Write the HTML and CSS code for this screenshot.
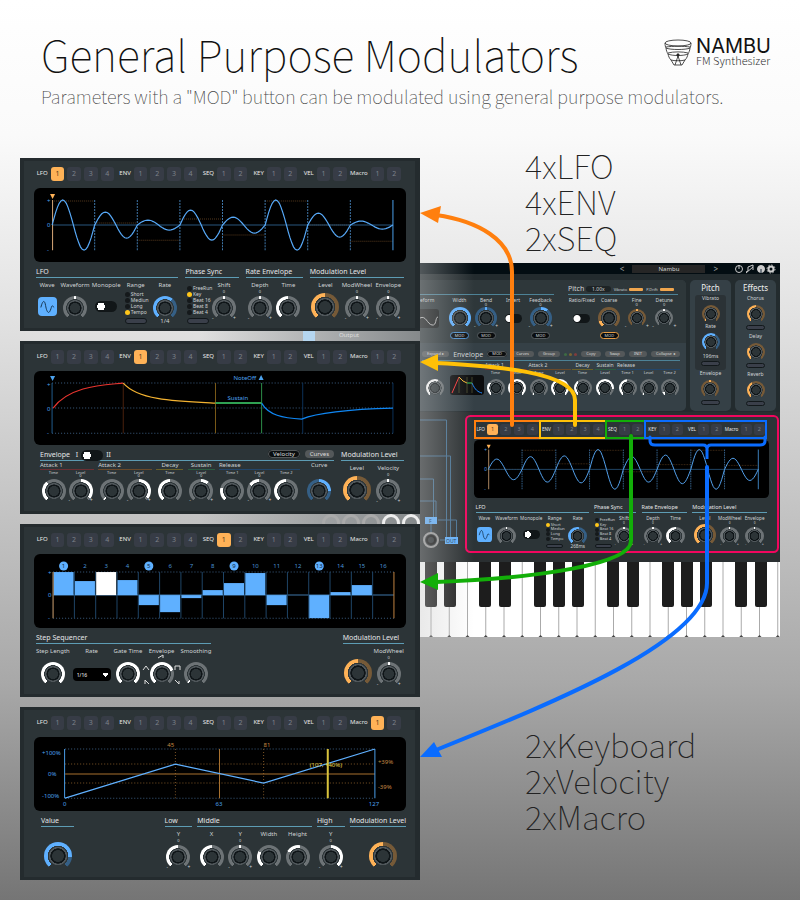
FILE: index.html
```html
<!DOCTYPE html>
<html lang="en">

<head>
    <meta charset="UTF-8" />
    <meta name="viewport" content="width=device-width, initial-scale=1.0" />
    <title>General Purpose Modulators - NAMBU FM Synthesizer</title>
    <link rel="stylesheet" href="styles.css">
</head>

<body>
    <div class="page">
        <header class="header">
            <div>
                <h1>General Purpose Modulators</h1>
                <p>Parameters with a "MOD" button can be modulated using general purpose modulators.</p>
            </div>
            <div class="logo">
                <svg class="logo-mark" viewBox="0 0 28 28" fill="none" stroke="#222" stroke-width="0.8">
                    <ellipse cx="14" cy="4" rx="13" ry="3" />
                    <path d="M1 4c0 2 .4 4 1 5 4 2 20 2 24 0 .6-1 1-3 1-5M2 9c.3 3 1 4 2 6 4 2 16 2 20 0 1-2 1.700-3 2-6M4 15c.5 2 1 4 3 6l3 5h8l3-5c2-2 2.500-4 3-6M7 21c3 1 11 1 14 0M2 8c6-1 18-1 24 0M4 14c5-1.500 15-1.500 20 0M11 26l3-9 3 9" />
                    <circle cx="14" cy="16" r="1.200" fill="#222" />
                </svg>
                <div>
                    <strong>NAMBU</strong>
                    <span>FM Synthesizer</span>
                </div>
            </div>
        </header>

        <main class="main">
            <div class="panels">
                <!-- LFO -->
                <section class="panel">
                    <div class="tabs" data-active="LFO1"></div>
                    <svg class="screen wave" viewBox="0 0 371 74" data-amps="25,13,5,15,8,25,12,4" data-levels="13,35,52,31,47,13,37,53"></svg>
                    <div class="sections lfo-sections">
                        <div>
                            <h2>LFO</h2>
                            <div class="controls lfo-cols">
                                <label class="ctl">Wave
                                    <button class="wave-btn" type="button" aria-label="Wave"><svg viewBox="0 0 20 20"><path d="M3 11c2-8 4-8 5-2s3 10 5 5 1-6 4-3" /></svg></button>
                                </label>
                                <label class="ctl">Waveform<input type="range" class="knob" style="--a:134deg;--b:146deg"></label>
                                <label class="ctl">Monopole<input type="checkbox" class="switch"></label>
                                <div class="ctl">Range
                                    <div class="radios">
                                        <label><input type="radio" name="range1">Short</label>
                                        <label><input type="radio" name="range1">Mediun</label>
                                        <label><input type="radio" name="range1">Long</label>
                                        <label><input type="radio" name="range1" checked>Tempo</label>
                                    </div>
                                    <button class="led" type="button" aria-label="Next range"></button>
                                </div>
                                <label class="ctl">Rate<input type="range" class="knob blue" style="--b:180deg"><small>1/4</small></label>
                            </div>
                        </div>
                        <div>
                            <h2>Phase Sync</h2>
                            <div class="controls sync-cols">
                                <div class="ctl sync">
                                    <div class="radios">
                                        <label><input type="radio" name="sync1">FreeRun</label>
                                        <label><input type="radio" name="sync1" checked>Key</label>
                                        <label><input type="radio" name="sync1">Beat 16</label>
                                        <label><input type="radio" name="sync1">Beat 8</label>
                                        <label><input type="radio" name="sync1">Beat 4</label>
                                    </div>
                                    <button class="led" type="button" aria-label="Next sync"></button>
                                </div>
                                <label class="ctl bi">Shift<input type="range" class="knob" style="--a:134deg;--b:146deg"></label>
                            </div>
                        </div>
                        <div>
                            <h2>Rate Envelope</h2>
                            <div class="controls">
                                <label class="ctl bi">Depth<input type="range" class="knob" style="--a:134deg;--b:146deg"></label>
                                <label class="ctl">Time<input type="range" class="knob" style="--b:140deg"></label>
                            </div>
                        </div>
                        <div>
                            <h2>Modulation Level</h2>
                            <div class="controls">
                                <label class="ctl">Level<input type="range" class="knob big orange" style="--b:140deg"></label>
                                <label class="ctl bi">ModWheel<input type="range" class="knob" style="--a:134deg;--b:146deg"></label>
                                <label class="ctl bi">Envelope<input type="range" class="knob" style="--a:134deg;--b:146deg"></label>
                            </div>
                        </div>
                    </div>
                </section>

                <div class="strip"><i></i><span>Output</span></div>

                <!-- Envelope -->
                <section class="panel">
                    <div class="tabs" data-active="ENV1"></div>
                    <svg class="screen" viewBox="0 0 371 74">
                        <path class="dots" d="M18 12H359M18 37H359M18 62H359" />
                        <path d="M18 12V62" stroke="#215b8c" />
                        <path d="M89 62V12" stroke="#4a210c" /><path d="M181 12V62" stroke="#7a5a18" />
                        <path d="M227 12V62" stroke="#2c8c48" /><path d="M268 12V62M358 12V62" stroke="#0c3158" />
                        <path d="M19 37C36 14 72 14 89 12" stroke="#e8352f" stroke-width="1.200" />
                        <path d="M89 12C104 29 140 30 181 32" stroke="#f3b231" stroke-width="1.200" />
                        <path d="M181 32H227" stroke="#2fa153" stroke-width="2" />
                        <path d="M227 32C234 44 248 47 267 48C284 41 320 38 358 37" stroke="#0f86f2" stroke-width="1.200" />
                        <path class="blue-fill" d="M16 5h5l-2.500 5zM224 9h5l-2.500-5z" />
                        <text class="t-blue" x="199" y="9">NoteOff</text><text class="t-blue" x="193" y="29">Sustain</text>
                        <text class="t-blue" x="13" y="16">+</text><text class="t-blue" x="13" y="40">0</text><text class="t-blue" x="13" y="64">-</text>
                    </svg>
                    <div class="sections env-sections">
                        <div>
                            <h2>Envelope <span class="switch-line">I<input type="checkbox" class="switch" aria-label="Envelope mode">II</span>
                                <span class="pills"><button type="button" class="pill dark">Velocity</button><button type="button" class="pill">Curves</button></span>
                            </h2>
                            <div class="env-row">
                                <div class="sub red"><h3>Attack 1</h3>
                                    <label class="ctl tiny">Time<input type="range" class="knob" style="--b:100deg"></label>
                                    <label class="ctl tiny bi">Level<input type="range" class="knob" style="--a:140deg;--b:270deg"></label>
                                </div>
                                <div class="sub amber"><h3>Attack 2</h3>
                                    <label class="ctl tiny">Time<input type="range" class="knob" style="--b:6deg"></label>
                                    <label class="ctl tiny bi">Level<input type="range" class="knob" style="--a:140deg;--b:270deg"></label>
                                </div>
                                <div class="sub gold"><h3>Decay</h3>
                                    <label class="ctl tiny">Time<input type="range" class="knob" style="--b:140deg"></label>
                                </div>
                                <div class="sub green"><h3>Sustain</h3>
                                    <label class="ctl tiny bi">Level<input type="range" class="knob" style="--a:140deg;--b:180deg"></label>
                                </div>
                                <div class="sub navy"><h3>Release</h3>
                                    <label class="ctl tiny">Time 1<input type="range" class="knob" style="--b:65deg"></label>
                                    <label class="ctl tiny bi">Level<input type="range" class="knob" style="--a:85deg;--b:140deg"></label>
                                    <label class="ctl tiny">Time 2<input type="range" class="knob" style="--b:140deg"></label>
                                </div>
                                <label class="ctl curve">Curve<input type="range" class="knob blue" style="--a:140deg;--b:230deg"></label>
                            </div>
                        </div>
                        <div>
                            <h2>Modulation Level</h2>
                            <div class="controls">
                                <label class="ctl">Level<input type="range" class="knob big orange" style="--b:140deg"></label>
                                <label class="ctl bi">Velocity<input type="range" class="knob" style="--a:134deg;--b:146deg"></label>
                            </div>
                        </div>
                    </div>
                </section>

                <div class="strip knobs-strip"><b></b><b></b><b></b><b class="on"></b><b class="on"></b></div>

                <!-- Step sequencer -->
                <section class="panel">
                    <div class="tabs" data-active="SEQ1"></div>
                    <svg class="screen steps" viewBox="0 0 371 74" data-steps="23,14,23,15,-10,-17,-3,5,12,22,-10,0,-23,3,10,0"></svg>
                    <div class="sections seq-sections">
                        <div>
                            <h2>Step Sequencer</h2>
                            <div class="controls seq-cols">
                                <label class="ctl">Step Length<input type="range" class="knob" style="--b:280deg"></label>
                                <label class="ctl">Rate<select class="select"><option>1/16</option></select></label>
                                <label class="ctl">Gate Time<input type="range" class="knob" style="--b:280deg"></label>
                                <label class="ctl shapes">Envelope<input type="range" class="knob" style="--b:210deg">
                                    <svg viewBox="0 0 40 32"><path d="M16 4l5-3v3M1 16l3-4 3 4M33 16v-4h5v4M3 30v-4l4 4M33 26l4 4v-3" /></svg>
                                </label>
                                <label class="ctl">Smoothing<input type="range" class="knob" style="--b:6deg"></label>
                            </div>
                        </div>
                        <div>
                            <h2>Modulation Level</h2>
                            <div class="controls">
                                <label class="ctl"><span>&nbsp;</span><input type="range" class="knob big orange" aria-label="Level" style="--b:140deg"></label>
                                <label class="ctl bi">ModWheel<input type="range" class="knob" style="--a:134deg;--b:146deg"></label>
                            </div>
                        </div>
                    </div>
                </section>

                <div class="strip plain"></div>

                <!-- Macro -->
                <section class="panel">
                    <div class="tabs" data-active="Macro1"></div>
                    <svg class="screen" viewBox="0 0 371 74">
                        <path class="dots" d="M31 12H340M31 61H340" />
                        <path d="M31 27H340M31 46H340M141 12V61M229 12V61" stroke="#7b5426" stroke-dasharray="1 2" />
                        <path d="M31 37H340M185 12V61" stroke="#a8712f" />
                        <path d="M30.500 12V61M340 12V61" stroke="#4a9ee8" />
                        <path d="M31 61L141 27L229 46L340 12" stroke="#5fb0ff" stroke-width="1.200" />
                        <path d="M293 12V61" stroke="#d8c23c" stroke-width="2" />
                        <g class="t-blue"><text x="8" y="18">+100%</text><text x="14" y="39">0%</text><text x="8" y="61">-100%</text><text x="29" y="69">0</text><text x="181" y="69">63</text><text x="334" y="69">127</text></g>
                        <g class="t-orange"><text x="133" y="10">45</text><text x="229" y="10">81</text><text x="343" y="27">+39%</text><text x="343" y="52">-39%</text></g>
                        <text class="t-yellow" x="275" y="30">(107, +40%)</text>
                    </svg>
                    <div class="sections macro-sections">
                        <div class="value">
                            <h2>Value</h2>
                            <div class="controls"><label class="ctl"><span>&nbsp;</span><input type="range" class="knob big blue" aria-label="Value" style="--b:235deg"></label></div>
                        </div>
                        <div>
                            <h2>Low</h2>
                            <div class="controls"><label class="ctl bi">Y<input type="range" class="knob" style="--b:140deg"></label></div>
                        </div>
                        <div>
                            <h2>Middle</h2>
                            <div class="controls">
                                <label class="ctl">X<input type="range" class="knob" style="--b:140deg"></label>
                                <label class="ctl bi">Y<input type="range" class="knob" style="--a:134deg;--b:146deg"></label>
                                <label class="ctl">Width<input type="range" class="knob" style="--b:80deg"></label>
                                <label class="ctl">Height<input type="range" class="knob" style="--a:80deg;--b:150deg"></label>
                            </div>
                        </div>
                        <div>
                            <h2>High</h2>
                            <div class="controls"><label class="ctl bi">Y<input type="range" class="knob" style="--a:140deg;--b:280deg"></label></div>
                        </div>
                        <div>
                            <h2>Modulation Level</h2>
                            <div class="controls level-last"><label class="ctl"><span>&nbsp;</span><input type="range" class="knob big orange" aria-label="Modulation Level" style="--b:140deg"></label></div>
                        </div>
                    </div>
                </section>
            </div>

            <div class="side">
                <p class="list">4xLFO<br>4xENV<br>2xSEQ</p>

                <div class="synth">
                    <div class="topbar">
                        <button type="button">&lt;</button>
                        <span class="preset">Nambu</span>
                        <button type="button">&gt;</button>
                        <svg viewBox="0 0 42 10" fill="none" stroke="#ccc">
                            <circle cx="5" cy="5" r="3.500" /><path d="M5 1v4M12 8l2-1V3l5-2v5M12 9l7-6" />
                            <circle cx="27" cy="5" r="3.500" fill="#ccc" /><path d="M27 5v4M25 4v0M29 4v0" stroke="#123" />
                            <circle cx="37" cy="5" r="2.500" stroke-width="2" /><circle cx="37" cy="5" r="4" stroke-dasharray="1.500 1.600" />
                        </svg>
                    </div>
                    <div class="upper">
                        <div class="operator">
                            <div class="osc">
                                <div class="osc-left">
                                    <h2>&nbsp;</h2>
                                    <div class="controls">
                                        <div class="ctl cut">eform<svg class="shape" viewBox="0 0 19 19"><path d="M0 9c6-3 7 6 12 7s3-8 6-8" /></svg></div>
                                        <label class="ctl">Width<input type="range" class="knob blue" style="--b:280deg"><span class="mod on">MOD</span></label>
                                        <label class="ctl bi">Bend<input type="range" class="knob blue" style="--a:134deg;--b:146deg"><span class="mod">MOD</span></label>
                                        <label class="ctl">Invert<input type="checkbox" class="switch"></label>
                                        <label class="ctl bi">Feedback<input type="range" class="knob blue" style="--a:140deg;--b:180deg"><span class="mod">MOD</span></label>
                                    </div>
                                </div>
                                <div class="osc-pitch">
                                    <h2>Pitch <span class="tag">1.00x</span><em>Vibrato<i></i></em><em>P.Drift<i></i></em></h2>
                                    <div class="controls">
                                        <label class="ctl ratio">Ratio/Fixed<input type="checkbox" class="switch"></label>
                                        <label class="ctl">Coarse<input type="range" class="knob orange" style="--b:30deg"><span class="mod warm">MOD</span></label>
                                        <label class="ctl bi">Fine<input type="range" class="knob small orange" style="--a:134deg;--b:146deg"></label>
                                        <label class="ctl bi">Detune<input type="range" class="knob small" style="--a:134deg;--b:146deg"></label>
                                    </div>
                                </div>
                            </div>
                            <div class="op-env">
                                <h2><button type="button" class="pill">Expand ▸</button> Envelope <button type="button" class="pill dark">MOD</button><button type="button" class="pill">Curves</button><button type="button" class="pill">Group</button><span class="leds"><i></i><i></i><i></i></span><button type="button" class="pill">Copy</button><button type="button" class="pill">Swap</button><button type="button" class="pill">INIT</button><button type="button" class="pill">Collapse ◂</button></h2>
                                <div class="env-row">
                                    <label class="ctl tiny"><span>&nbsp;</span><input type="range" class="knob small" aria-label="Envelope shape" style="--b:160deg"></label>
                                    <svg class="mini" viewBox="0 0 34 20"><path d="M2 18L9 2" stroke="#f33" /><path d="M9 2l4 4 4 2" stroke="#fb3" /><path d="M17 8h5" stroke="#3c5" /><path d="M22 8c3 7 6 9 10 10" stroke="#28f" /><path d="M9 2v16M17 2v16M22 2v16" stroke="#774" stroke-width=".5" /></svg>
                                    <div class="sub red"><h3>Attack 1</h3>
                                        <label class="ctl tiny">Time<input type="range" class="knob small" style="--b:90deg"></label>
                                        <label class="ctl tiny">Level<input type="range" class="knob small" style="--b:280deg"></label>
                                    </div>
                                    <div class="sub amber"><h3>Attack 2</h3>
                                        <label class="ctl tiny">Time<input type="range" class="knob small" style="--b:6deg"></label>
                                        <label class="ctl tiny">Level<input type="range" class="knob small" style="--b:280deg"></label>
                                    </div>
                                    <div class="sub gold"><h3>Decay</h3>
                                        <label class="ctl tiny">Time<input type="range" class="knob small" style="--b:100deg"></label>
                                    </div>
                                    <div class="sub green"><h3>Sustain</h3>
                                        <label class="ctl tiny">Level<input type="range" class="knob small" style="--b:240deg"></label>
                                    </div>
                                    <div class="sub navy"><h3>Release</h3>
                                        <label class="ctl tiny">Time 1<input type="range" class="knob small" style="--b:130deg"></label>
                                        <label class="ctl tiny">Level<input type="range" class="knob small" style="--b:6deg"></label>
                                        <label class="ctl tiny">Time 2<input type="range" class="knob small" style="--b:20deg"></label>
                                    </div>
                                </div>
                            </div>
                        </div>
                        <div class="column">
                            <h2>Pitch</h2>
                            <div class="inset">
                                <label class="ctl">Vibrato<input type="range" class="knob small orange" style="--b:6deg"></label>
                                <label class="ctl">Rate<input type="range" class="knob small blue" style="--b:170deg"><small>196ms</small></label>
                                <button class="led" type="button" aria-label="Vibrato mod"></button>
                            </div>
                            <label class="ctl">Envelope<input type="range" class="knob small orange" style="--a:134deg;--b:146deg"></label>
                            <button class="led" type="button" aria-label="Envelope mod"></button>
                        </div>
                        <div class="column effects">
                            <h2>Effects</h2>
                            <label class="ctl">Chorus<input type="range" class="knob small orange" style="--b:140deg"></label>
                            <button class="led" type="button" aria-label="Chorus on"></button>
                            <label class="ctl">Delay<input type="range" class="knob small orange" style="--b:80deg"></label>
                            <button class="led" type="button" aria-label="Delay on"></button>
                            <label class="ctl">Reverb<input type="range" class="knob small orange" style="--b:110deg"></label>
                            <button class="led" type="button" aria-label="Reverb on"></button>
                        </div>
                    </div>
                    <div class="lower">
                        <svg class="wires" viewBox="0 0 45 146">
                            <path d="M0 8H26.500V125M0 44H30.500V125M0 67H13.500V105M0 89H16V105M18 108H36.500V125M11 112v10M20 128H25" />
                            <rect x="5" y="105" width="12" height="7" /><rect x="25" y="125" width="13" height="7" />
                            <text x="9" y="111">F</text><text x="26" y="131">OUT</text>
                            <circle cx="11" cy="128" r="7" /><circle class="hub" cx="11" cy="128" r="4" />
                        </svg>
                        <section class="panel mini-panel">
                            <div class="tabs" data-active="LFO1"></div>
                            <svg class="screen wave" viewBox="0 0 371 74" data-amps="13,16,17,25,16,18,25,14" data-levels="37,13,30,13,40,31,13,32"></svg>
                            <div class="sections lfo-sections">
                                <div>
                                    <h2>LFO</h2>
                                    <div class="controls lfo-cols">
                                        <label class="ctl">Wave
                                            <button class="wave-btn" type="button" aria-label="Wave"><svg viewBox="0 0 20 20"><path d="M3 11c2-8 4-8 5-2s3 10 5 5 1-6 4-3" /></svg></button>
                                        </label>
                                        <label class="ctl">Waveform<input type="range" class="knob" style="--a:134deg;--b:146deg"></label>
                                        <label class="ctl">Monopole<input type="checkbox" class="switch"></label>
                                        <div class="ctl">Range
                                            <div class="radios">
                                                <label><input type="radio" name="range2" checked>Short</label>
                                                <label><input type="radio" name="range2">Mediun</label>
                                                <label><input type="radio" name="range2">Long</label>
                                                <label><input type="radio" name="range2">Tempo</label>
                                            </div>
                                            <button class="led" type="button" aria-label="Next range"></button>
                                        </div>
                                        <label class="ctl">Rate<input type="range" class="knob blue" style="--b:150deg"><small>268ms</small></label>
                                    </div>
                                </div>
                                <div>
                                    <h2>Phase Sync</h2>
                                    <div class="controls sync-cols">
                                        <div class="ctl sync">
                                            <div class="radios">
                                                <label><input type="radio" name="sync2">FreeRun</label>
                                                <label><input type="radio" name="sync2" checked>Key</label>
                                                <label><input type="radio" name="sync2">Beat 16</label>
                                                <label><input type="radio" name="sync2">Beat 8</label>
                                                <label><input type="radio" name="sync2">Beat 4</label>
                                            </div>
                                            <button class="led" type="button" aria-label="Next sync"></button>
                                        </div>
                                        <label class="ctl bi">Shift<input type="range" class="knob" style="--a:134deg;--b:146deg"></label>
                                    </div>
                                </div>
                                <div>
                                    <h2>Rate Envelope</h2>
                                    <div class="controls">
                                        <label class="ctl bi">Depth<input type="range" class="knob" style="--a:134deg;--b:146deg"></label>
                                        <label class="ctl">Time<input type="range" class="knob" style="--b:140deg"></label>
                                    </div>
                                </div>
                                <div>
                                    <h2>Modulation Level</h2>
                                    <div class="controls">
                                        <label class="ctl">Level<input type="range" class="knob big orange" style="--b:140deg"></label>
                                        <label class="ctl bi">ModWheel<input type="range" class="knob" style="--a:134deg;--b:146deg"></label>
                                        <label class="ctl bi">Envelope<input type="range" class="knob" style="--a:134deg;--b:146deg"></label>
                                    </div>
                                </div>
                            </div>
                        </section>
                    </div>
                    <svg class="keyboard" viewBox="0 0 360 75"></svg>
                </div>

                <p class="list">2xKeyboard<br>2xVelocity<br>2xMacro</p>
            </div>
        </main>

        <!-- arrows from the modulator tabs to the detail panels -->
        <svg class="arrows" viewBox="0 0 800 900">
            <g stroke="#ff7f0e">
                <rect x="475" y="421" width="65" height="17" />
                <path class="line" d="M512 425V272C512 240 478 221 436 215" /><path class="head" d="M420 213L441 206L438 223Z" fill="#ff7f0e" />
            </g>
            <g stroke="#ffc107">
                <rect x="540" y="421" width="66" height="17" />
                <path class="line" d="M575 425V400C575 372 495 366 436 363" /><path class="head" d="M420 362L438 354V371Z" fill="#ffc107" />
            </g>
            <g stroke="#12ae08">
                <rect x="606" y="421" width="39" height="17" />
                <path class="line" d="M631 436V541C631 564 540 578 436 582" /><path class="head" d="M420 582L438 573V590Z" fill="#12ae08" />
            </g>
            <g stroke="#0a6cff">
                <rect x="645" y="421" width="121" height="17" />
                <path class="line brace" d="M650 437V441Q650 445 655 445H703Q707 445 707 449V459V449Q707 445 711 445H760Q765 445 765 441V437" />
                <path class="line" d="M707 467V583C707 640 560 700 436 750" /><path class="head" d="M420 757L434 742L442 757Z" fill="#0a6cff" />
            </g>
        </svg>
    </div>

    <script src="script.js"></script>
</body>

</html>
```

FILE: styles.css
```css
* {
    box-sizing: border-box;
}

body {
    margin: 0;
    font-family: "Noto Sans", "Open Sans", sans-serif;
    background: #777;
}

.page {
    position: relative;
    min-height: 900px;
    background: linear-gradient(#fff 0, #fafafa 15%, #e2e2e2 35%, #c6c6c6 55%, #a8a8a8 76%, #757575 100%);
}

h1, h2, h3, p {
    margin: 0;
    font-weight: normal;
}

button, select, input {
    font-family: inherit;
    margin: 0;
    padding: 0;
}

.header {
    display: flex;
    justify-content: space-between;
    height: 147px;
    padding: 22px 29px 0 41px;
    font-family: "Noto Sans CJK JP", sans-serif;
}

.header h1 {
    font-size: 43px;
    line-height: 62px;
    font-weight: 100;
    color: #111;
}

.header p {
    font-size: 18px;
    line-height: 24px;
    font-weight: 100;
    white-space: nowrap;
    color: #444;
}

.header > div:first-child {
    width: 0;
    white-space: nowrap;
}

.logo {
    display: flex;
    gap: 4px;
    padding-top: 17px;
    height: 46px;
}

.logo-mark {
    width: 28px;
    height: 28px;
}

.logo strong, .logo span {
    display: block;
    white-space: nowrap;
}

.logo strong {
    font: 400 20px/15px Inter, sans-serif;
    color: #111;
}

.logo span {
    font-size: 11px;
    line-height: 12px;
    font-weight: 300;
    color: #333;
}

.main {
    display: grid;
    grid-template-columns: 20fr 18fr;
    padding: 0 20px;
}

.panels {
    padding-top: 11px;
}

/* modulator panels */
.panel {
    height: 173px;
    padding: 6px 9px 0 10px;
    border: 3px solid #242b2e;
    border-left-width: 4px;
    border-right-width: 5px;
    background: #2c3437;
    color: #cfd3d5;
    overflow: hidden;
}

.tabs {
    display: grid;
    grid-template-columns: repeat(22, 1fr);
    gap: 3px;
    padding-right: 5px;
    height: 14px;
}

.tabs span {
    justify-self: end;
    font-size: 6px;
    line-height: 13px;
    color: #e8e8e8;
}

.tabs button {
    border: 0;
    border-radius: 3px;
    background: #373c46;
    color: #7d828a;
    font-size: 7px;
    line-height: 14px;
}

.tabs button.active {
    background: #ffb257;
    color: #54391a;
}

.screen {
    display: block;
    width: 100%;
    margin-top: 7px;
    border-radius: 6px;
    background: #000;
    fill: none;
}

.screen text {
    font-size: 6px;
    stroke: none;
}

.dots {
    stroke: #3b5d80;
    stroke-dasharray: 1 2;
}

.blue-fill, .t-blue {
    fill: #4da3ee;
}

.t-orange {
    fill: #c58a45;
}

.t-yellow {
    fill: #e8d650;
}

.sections {
    display: grid;
    gap: 7px;
    padding: 5px 2px 0;
}

.lfo-sections {
    grid-template-columns: 142fr 53fr 57fr 94fr;
}

.env-sections {
    grid-template-columns: 290fr 62fr;
    padding-left: 6px;
}

.seq-sections {
    grid-template-columns: 171fr 60fr;
    column-gap: 132px;
}

.macro-sections {
    grid-template-columns: 120fr 28fr 116fr 28fr 54fr;
    gap: 5px;
    padding-left: 7px;
    padding-right: 0;
}

.value {
    width: 28%;
}

.sections h2 {
    height: 11px;
    border-bottom: 1px solid #5d9cb4;
    font-size: 7px;
    line-height: 9px;
    color: #e4e6e7;
    white-space: nowrap;
}

.controls {
    display: grid;
    grid-auto-flow: column;
    grid-auto-columns: 1fr;
    padding-top: 3px;
}

.lfo-cols {
    grid-template-columns: 22fr 34fr 28fr 31fr 27fr;
}

.sync-cols {
    grid-template-columns: 25px 27px;
}

.seq-cols {
    grid-template-columns: 33fr 43fr 28fr 38fr 29fr;
}

.level-last {
    padding-left: 11px;
}

.ctl {
    position: relative;
    display: flex;
    flex-direction: column;
    align-items: center;
    min-width: 0;
    font-size: 6px;
    line-height: 9px;
    white-space: nowrap;
}

.ctl small {
    font-size: 6px;
    line-height: 6px;
    margin-top: -2px;
}

.knob {
    --a: 0deg;
    --on: #fff;
    --off: #6d7376;
    appearance: none;
    flex: none;
    width: 24px;
    height: 24px;
    margin-top: 6px;
    border-radius: 50%;
    background:
        radial-gradient(circle closest-side, #2c3437 0 40%, #0f1518 44% 53%, #50575b 56% 64%, #2c3437 67% 72%, transparent 75%),
        conic-gradient(from 220deg, var(--off) 0 var(--a), var(--on) var(--a) var(--b), var(--off) var(--b) 280deg, transparent 280deg);
}

.knob::-webkit-slider-thumb {
    appearance: none;
    width: 0;
    height: 0;
}

.knob.big {
    width: 28px;
    height: 28px;
    margin-top: 3px;
}

.knob.small {
    width: 18px;
    height: 18px;
    margin-top: 4px;
}

.knob.blue {
    --on: #5fb0ff;
    --off: #355f85;
}

.knob.orange {
    --on: #ffb257;
    --off: #765a38;
}

/* zero mark and minus / plus around bipolar knobs */
.bi::before {
    content: "0";
    position: absolute;
    top: 8px;
    font-size: 4px;
    line-height: 6px;
}

.bi::after {
    content: "- +";
    position: absolute;
    top: 35px;
    width: 24px;
    font-size: 5px;
    line-height: 5px;
    text-align-last: justify;
}

.wave-btn {
    width: 19px;
    height: 19px;
    margin-top: 7px;
    border: 0;
    border-radius: 4px;
    background: #5fb0ff;
}

.wave-btn svg {
    display: block;
    fill: none;
    stroke: #12304c;
    stroke-width: 1;
}

.switch {
    appearance: none;
    flex: none;
    width: 22px;
    height: 11px;
    margin-top: 11px;
    border-radius: 6px;
    background: radial-gradient(circle at 6px 50%, #fff 0 4px, transparent 4px), #111618;
}

.radios {
    display: flex;
    flex-direction: column;
    width: 22px;
    margin-top: 1px;
}

.radios label {
    display: flex;
    align-items: center;
    gap: 1px;
    font-size: 5px;
    line-height: 6px;
}

.radios input {
    appearance: none;
    flex: none;
    width: 5px;
    height: 5px;
    border-radius: 50%;
    background: #15191b;
}

.radios input:checked {
    background: #ffc61a;
}

.sync .radios {
    margin-top: 4px;
}

.led {
    flex: none;
    width: 22px;
    height: 6px;
    margin-top: 3px;
    border: 1px solid #12181b;
    border-radius: 3px;
    background: #3a3f4a;
}

.select {
    appearance: none;
    width: 38px;
    height: 13px;
    margin-top: 12px;
    padding-left: 4px;
    border: 0;
    border-radius: 4px;
    background: conic-gradient(from -40deg at 50% 100%, #fff 80deg, transparent 0) no-repeat 30px 5px / 5px 4px, #000;
    color: #fff;
    font-size: 5px;
}

.shapes svg {
    position: absolute;
    top: 7px;
    width: 40px;
    height: 32px;
    fill: none;
    stroke: #ddd;
}

/* envelope rows */
.env-row {
    display: flex;
    justify-content: space-between;
}

.switch-line .switch {
    margin: 0 3px;
    vertical-align: middle;
}

.switch-line {
    display: inline-block;
    height: 9px;
    margin-left: 4px;
}

.pills {
    float: right;
    display: flex;
    gap: 5px;
}

.pill {
    height: 8px;
    padding: 0 5px;
    border: 0;
    border-radius: 4px;
    background: #54585a;
    color: #ddd;
    font-size: 6px;
    line-height: 8px;
}

.pill.dark {
    background: #0a0d0f;
    outline: 1px solid #54585a;
    outline-offset: -1px;
}

.sub {
    display: grid;
    grid-auto-flow: column;
    grid-template-rows: 9px auto;
}

.sub h3 {
    grid-row: 1;
    grid-column: 1 / -1;
    font-size: 6px;
    line-height: 8px;
    border-bottom: 1px solid;
    white-space: nowrap;
}

.sub .ctl {
    grid-row: 2;
    width: 27px;
}

.sub.red h3 {
    grid-column: 1 / span 2;
    border-color: #6b3034;
}

.sub.amber h3 {
    grid-column: 1 / span 2;
    border-color: #6b4a2a;
}

.sub.gold h3 {
    text-align: center;
    border-color: #6b6128;
}

.sub.green h3 {
    text-align: center;
    border-color: #2b5c41;
}

.sub.navy h3 {
    grid-column: 1 / span 3;
    border-color: #23466b;
}

.tiny {
    font-size: 4px;
    line-height: 6px;
}

.tiny .knob {
    margin-top: 3px;
}

.tiny.bi::before {
    top: 4px;
    line-height: 4px;
}

.tiny.bi::after {
    top: 28px;
}

.curve {
    width: 30px;
}

.curve .knob {
    margin-top: 9px;
}

/* slices of the instrument showing between the panels */
.strip {
    display: flex;
    justify-content: flex-end;
    gap: 24px;
    height: 10px;
    padding-right: 61px;
    background: linear-gradient(90deg, transparent 45%, #85898b);
    color: #ddd;
    font-size: 6px;
    line-height: 8px;
    overflow: hidden;
}

.strip i {
    width: 12px;
    background: #b5d6f0;
}

.knobs-strip {
    gap: 2px;
    padding-right: 0;
}

.knobs-strip b {
    width: 18px;
    height: 18px;
    border: 3px solid #aaa;
    border-radius: 50%;
}

.knobs-strip .on {
    border-color: #eee;
}

.strip.plain {
    background: none;
}

/* right side */
.list {
    padding-left: 105px;
    font-family: "Noto Sans CJK JP", sans-serif;
    font-size: 33px;
    line-height: 36px;
    font-weight: 100;
    color: #222;
}

.synth {
    position: relative;
    margin: 8px 0 89px;
    background: #232b2e;
    color: #cfd3d5;
}

.synth::after {
    content: "";
    position: absolute;
    inset: 0;
    background: linear-gradient(90deg, rgba(200, 200, 200, 0.4), transparent 15%);
    pointer-events: none;
}

.topbar {
    display: flex;
    align-items: center;
    justify-content: flex-end;
    gap: 8px;
    height: 11px;
    padding-right: 4px;
    background: #030d12;
}

.topbar button {
    border: 0;
    background: none;
    color: #aaa;
    font-size: 8px;
    line-height: 10px;
}

.preset {
    width: 73px;
    background: #262626;
    font-size: 6px;
    line-height: 8px;
    text-align: center;
}

.topbar svg {
    width: 42px;
    height: 10px;
    margin-left: 8px;
}

.upper {
    display: grid;
    grid-template-columns: 1fr 41px 41px;
    gap: 4px;
    height: 138px;
    padding: 6px 4px 1px 0;
}

.operator, .column {
    border-radius: 0 5px 5px 0;
    background: #354046;
    overflow: hidden;
}

.column {
    border-radius: 5px;
    display: flex;
    flex-direction: column;
    align-items: center;
}

.column h2 {
    font-size: 8px;
    line-height: 15px;
    color: #eee;
}

.column .ctl {
    font-size: 5px;
    line-height: 7px;
}

.column .knob {
    margin-top: 3px;
}

.inset {
    display: flex;
    flex-direction: column;
    align-items: center;
    width: 31px;
    height: 75px;
    border-radius: 3px;
    background: #2b3236;
}

.column .led {
    width: 19px;
    height: 5px;
    margin: 2px 0 3px;
}

.inset small {
    margin: 2px 0 0;
    font-size: 5px;
}

.osc {
    display: grid;
    grid-template-columns: 134px 110px;
    gap: 14px;
    height: 63px;
    padding-top: 4px;
    background: #2e373a;
}

.osc h2 {
    height: 11px;
    border-bottom: 1px solid #4d8296;
    font-size: 7px;
    line-height: 10px;
    white-space: nowrap;
}

.osc .controls {
    padding-top: 2px;
}

.osc-left .controls {
    grid-template-columns: 26px 27px 26px 28px 27px;
}

.osc .ctl {
    font-size: 5px;
    line-height: 7px;
}

.osc .knob {
    width: 22px;
    height: 22px;
    margin-top: 3px;
}

.osc .knob.small {
    width: 18px;
    height: 18px;
    margin-top: 5px;
}

.osc .switch {
    width: 17px;
    height: 9px;
    margin-top: 10px;
    background: radial-gradient(circle at 4px 50%, #fff 0 3px, transparent 4px), #111618;
}

.osc .bi::before {
    top: 5px;
}

.osc .bi::after {
    top: 27px;
}

.ctl.cut {
    align-items: flex-start;
}

.shape {
    width: 19px;
    height: 19px;
    margin-top: 5px;
    border-radius: 0 3px 3px 0;
    background: #171a1b;
    fill: none;
    stroke: #bbb;
}

.mod {
    width: 19px;
    margin-top: 3px;
    border: 1px solid #565d61;
    border-radius: 4px;
    background: #0a0d0f;
    font-size: 4px;
    line-height: 5px;
    text-align: center;
}

.mod.on {
    border-color: #4d8fce;
}

.mod.warm {
    border-color: #e59b44;
}

.tag {
    padding: 0 6px;
    border-radius: 3px;
    background: #1d2325;
    font-size: 5px;
}

.osc-pitch em {
    margin-left: 3px;
    font-size: 4px;
    font-style: normal;
}

.osc-pitch em i {
    display: inline-block;
    width: 14px;
    height: 3px;
    margin-left: 2px;
    border-radius: 1px;
    background: #f0a64e;
}

.op-env {
    padding: 5px 6px 0 2px;
}

.op-env h2 {
    display: flex;
    justify-content: space-between;
    align-items: center;
    height: 13px;
    border-bottom: 1px solid #4d8296;
    font-size: 7px;
}

.op-env .pill {
    height: 6px;
    padding: 0 5px;
    font-size: 4px;
    line-height: 6px;
}

.op-env .sub .ctl {
    width: 21px;
}

.op-env .sub h3 {
    font-size: 5px;
}

.leds {
    display: flex;
    gap: 2px;
}

.leds i {
    width: 3px;
    height: 3px;
    border-radius: 50%;
    background: #3d6b42;
}

.leds i + i {
    background: #7a6332;
}

.leds i + i + i {
    background: #803c3c;
}

.op-env .env-row > .ctl {
    width: 26px;
    padding-top: 9px;
}

.mini {
    width: 34px;
    height: 20px;
    margin-top: 14px;
    border-radius: 3px;
    background: #0b0c0d;
    fill: none;
}

.lower {
    display: grid;
    grid-template-columns: 45px 1fr;
    height: 150px;
    background: #2a2f31;
}

.wires {
    width: 45px;
    height: 146px;
    fill: none;
    stroke: #426f92;
}

.wires rect {
    fill: #5fb0ff;
    stroke: none;
}

.wires text {
    fill: #12304c;
    stroke: none;
    font-size: 5px;
}

.wires circle {
    stroke: #999;
    stroke-width: 2;
}

.wires .hub {
    fill: #2a2f31;
    stroke: #111;
}

/* same LFO panel at the instrument's own size, ringed in pink */
.mini-panel {
    zoom: 78%;
    height: 177px;
    margin: 4px 1px 0 0;
    padding: 9px 11px 0 9px;
    border: 3px solid #f2065e;
    border-radius: 7px;
}

.mini-panel .screen {
    margin-top: 6px;
}

.mini-panel .sections {
    padding-top: 7px;
}

.keyboard {
    display: block;
    width: 100%;
    background: #fff;
}

.arrows {
    position: absolute;
    top: 0;
    left: 0;
    width: 100%;
    fill: none;
    stroke-width: 2;
    pointer-events: none;
}

.arrows .line {
    stroke-width: 4;
    stroke-linecap: round;
}

.arrows .brace {
    stroke-width: 3;
}

.arrows .head {
    stroke: none;
}
```

FILE: script.js
```js
const groups = [["LFO", 4], ["ENV", 4], ["SEQ", 2], ["KEY", 2], ["VEL", 2], ["Macro", 2]];

// modulator tabs
document.querySelectorAll(".tabs").forEach(row => {
    let html = "";
    groups.forEach(([name, count]) => {
        html += `<span>${name}</span>`;
        for (let i = 1; i <= count; i++) {
            const active = row.dataset.active === name + i ? ' class="active"' : "";
            html += `<button type="button"${active}>${i}</button>`;
        }
    });
    row.innerHTML = html;
});

// LFO waves, one sine period per column
document.querySelectorAll(".wave").forEach(svg => {
    const amps = svg.dataset.amps.split(",").map(Number);
    const levels = svg.dataset.levels.split(",").map(Number);
    const left = 18, mid = 37, step = 42.5;
    let wave = `M${left} ${mid}`;
    let html = "";
    amps.forEach((amp, i) => {
        const x = left + i * step;
        for (let n = 1; n <= 24; n++) {
            wave += `L${(x + n * step / 24).toFixed(1)} ${(mid - amp * Math.sin(n / 12 * Math.PI)).toFixed(1)}`;
        }
        html += `<path d="M${x} ${levels[i]}h${step}" stroke="#56391d" stroke-dasharray="1 1"/>`;
        if (i) html += `<path d="M${x} 12V62" stroke="#3f76a8" stroke-dasharray="2 1"/>`;
    });
    html += `<path d="M18 37H358" stroke="#28577f"/><path d="M358 12V62" stroke="#4a9ee8"/>`;
    html += `<path d="M18.500 12V62" stroke="#d8a878"/><path d="M16 6h5l-2.500 5z" fill="#ffb257"/>`;
    html += `<path d="${wave}" stroke="#57a9f8" stroke-width="1.200"/>`;
    html += `<g class="t-blue"><text x="13" y="15">+</text><text x="13" y="39">0</text><text x="13" y="64">-</text></g>`;
    svg.innerHTML = html;
});

// step sequencer
document.querySelectorAll(".steps").forEach(svg => {
    const left = 19, mid = 41, step = 21.25;
    let html = `<path class="dots" d="M19 18H359M19 64H359"/><path d="M19 41H359" stroke="#3f76a8"/>`;
    svg.dataset.steps.split(",").map(Number).forEach((v, i) => {
        const x = left + i * step;
        const accent = i % 4 === 0;
        html += `<path d="M${x} 18V64" stroke="#1f4567"/>`;
        html += `<rect x="${x + 0.5}" y="${v > 0 ? mid - v : mid}" width="20" height="${Math.abs(v)}" fill="${i === 2 ? "#fff" : "#5fb0ff"}"/>`;
        if (accent) html += `<circle cx="${x + 10.5}" cy="12" r="4.500" fill="#5fb0ff"/>`;
        html += `<text x="${x + 10.5}" y="14" text-anchor="middle" fill="${accent ? "#0c2238" : "#4a93d4"}">${i + 1}</text>`;
    });
    html += `<path d="M19 18V64M359 18V64" stroke="#c08340"/>`;
    html += `<g class="t-blue"><text x="14" y="21">+</text><text x="14" y="43">0</text><text x="14" y="66">-</text></g>`;
    svg.innerHTML = html;
});

// keyboard
const blackKeys = [5, 24, 59, 79, 114, 133, 152, 187, 207, 242, 261, 280, 315, 335];
let keys = "";
for (let x = 11; x < 360; x += 18.25) {
    keys += `<path d="M${x} 0V75" stroke="#aaa"/><path d="M${x - 2} 75l2-2 2 2z" fill="#444"/>`;
}
blackKeys.forEach(x => {
    keys += `<path d="M${x} 0h12v43q0 2-2 2h-8q-2 0-2-2z" fill="#1d1d1d"/>`;
});
document.querySelector(".keyboard").innerHTML = keys;
```
